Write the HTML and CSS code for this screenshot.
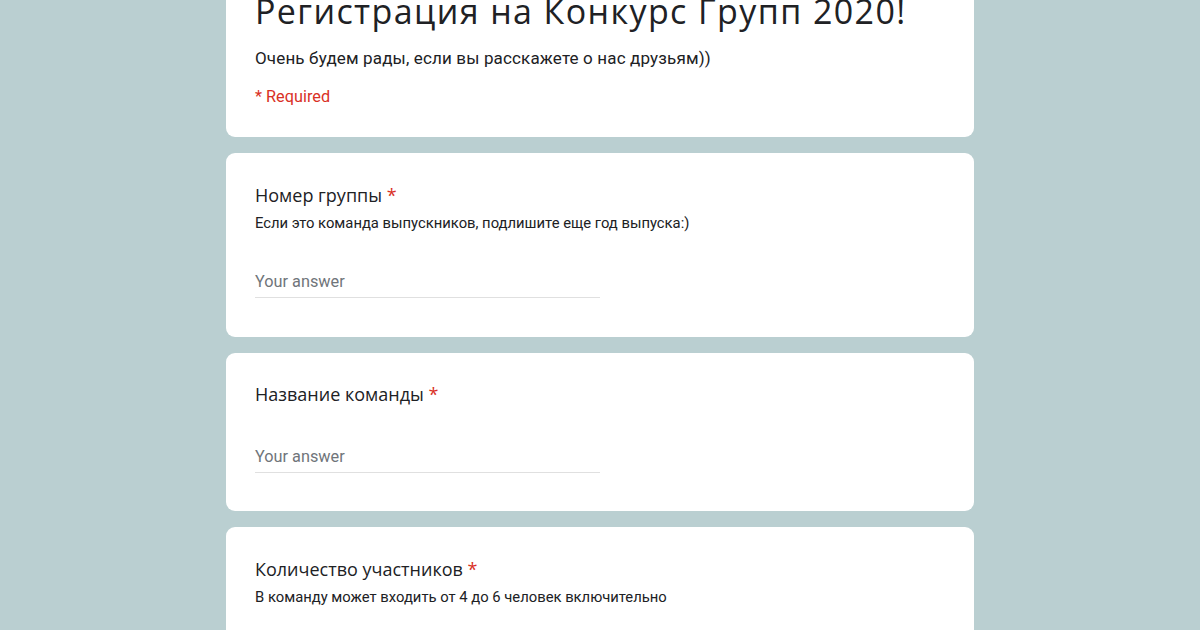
FILE: index.html
```html
<!DOCTYPE html>
<html lang="ru">
<head>
<meta charset="utf-8">
<link rel="stylesheet" href="styles.css">
</head>
<body>
<main class="form">
  <section class="card header-card">
    <h1 class="form-title">Регистрация на Конкурс Групп 2020!</h1>
    <p class="form-desc">Очень будем рады, если вы расскажете о нас друзьям))</p>
    <p class="required-note">* Required</p>
  </section>

  <section class="card question">
    <div class="q-title">Номер группы <span class="star">*</span></div>
    <div class="q-help">Если это команда выпускников, подлишите еще год выпуска:)</div>
    <div class="answer">Your answer</div>
  </section>

  <section class="card question short">
    <div class="q-title">Название команды <span class="star">*</span></div>
    <div class="answer no-help">Your answer</div>
  </section>

  <section class="card question">
    <div class="q-title">Количество участников <span class="star">*</span></div>
    <div class="q-help">В команду может входить от 4 до 6 человек включительно</div>
    <div class="answer">Your answer</div>
  </section>
</main>
</body>
</html>
```

FILE: styles.css
```css
html, body {
  margin: 0;
  padding: 0;
}
body {
  background: #bacfd1;
  font-family: Roboto, "Liberation Sans", sans-serif;
  color: #202124;
  height: 630px;
  overflow: hidden;
}
.form {
  width: 748px;
  margin: -41px 0 0 226px;
  display: flex;
  flex-direction: column;
  gap: 16px;
}
.card {
  background: #ffffff;
  border-radius: 9px;
  padding: 0 29px;
}
.header-card {
  padding-top: 30px;
  padding-bottom: 28px;
}
.form-title {
  margin: 0;
  font-family: "Open Sans", Roboto, sans-serif;
  font-weight: 400;
  font-size: 34px;
  letter-spacing: 1.4px;
  line-height: 44px;
  color: #202124;
  white-space: nowrap;
}
.form-desc {
  margin: 13px 0 0;
  font-size: 17px;
  letter-spacing: 0.15px;
  line-height: 24px;
  color: #202124;
}
.required-note {
  margin: 15px 0 0;
  font-size: 16.3px;
  line-height: 24px;
  color: #d93025;
}
.question {
  padding-top: 30px;
  padding-bottom: 39px;
}
.question.short {
  padding-top: 29px;
  padding-bottom: 38px;
}
.q-title {
  font-family: "Open Sans", Roboto, sans-serif;
  font-size: 18px;
  line-height: 24px;
  color: #202124;
}
.star {
  color: #d93025;
}
.q-help {
  margin-top: 5px;
  font-size: 14.8px;
  line-height: 22px;
  color: #202124;
}
.answer {
  margin-top: 36px;
  width: 345px;
  font-size: 16.3px;
  line-height: 24px;
  padding-bottom: 3px;
  color: #70757a;
  border-bottom: 1px solid #e0e0e0;
}
.answer.no-help {
  margin-top: 39px;
}
```
